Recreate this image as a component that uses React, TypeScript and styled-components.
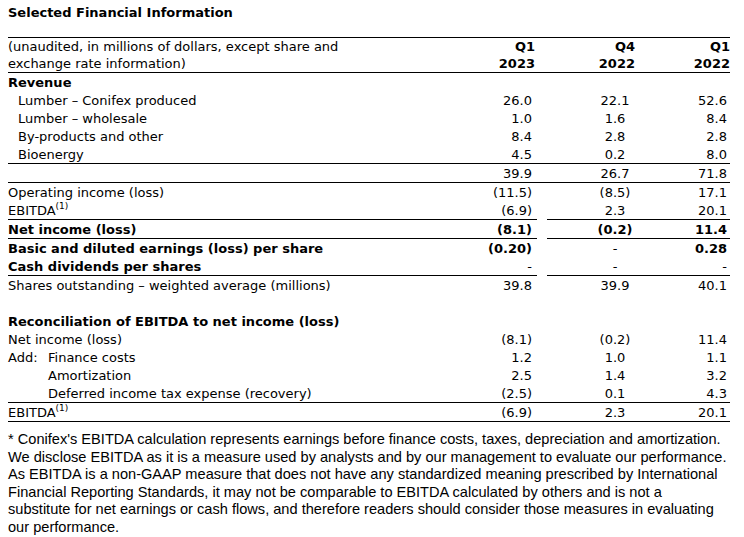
import styled, { createGlobalStyle, css } from 'styled-components';

const GlobalStyle = createGlobalStyle`
  html, body {
    margin: 0;
    padding: 0;
    background: #ffffff;
  }
  body {
    font-family: 'DejaVu Sans', Verdana, sans-serif;
    color: #000000;
  }
`;

const Page = styled.div`
  width: 744px;
  padding: 4px 8px 0 8px;
  box-sizing: border-box;
`;

const Title = styled.h2`
  margin: 0 0 16px 0;
  font-size: 13px;
  line-height: 17px;
  font-weight: bold;
`;

const Table = styled.div`
  width: 722px;
  display: flex;
  flex-direction: column;
  font-size: 13px;
`;

type Line = 'full' | 'split' | undefined;

const Row = styled.div`
  display: grid;
  grid-template-columns: 429px 100px 10px 90px 93px;
`;

const lineCss = (top: Line, bottom: Line, spacer: boolean) => css`
  border-top: ${top === 'full' || (top === 'split' && !spacer) ? '1px solid #000' : 'none'};
  border-bottom: ${bottom === 'full' || (bottom === 'split' && !spacer)
    ? '1px solid #000'
    : 'none'};
`;

const Cell = styled.div<{
  $top?: Line;
  $bottom?: Line;
  $spacer?: boolean;
  $align?: 'left' | 'right' | 'center';
  $bold?: boolean;
  $indent?: number;
  $pad?: number;
  $tall?: boolean;
}>`
  height: ${(p) => (p.$tall ? '34px' : '18px')};
  display: flex;
  flex-direction: column;
  justify-content: center;
  text-align: ${(p) => p.$align || 'left'};
  font-weight: ${(p) => (p.$bold ? 'bold' : 'normal')};
  padding-left: ${(p) => p.$indent || 0}px;
  padding-right: ${(p) => p.$pad || 0}px;
  line-height: 17px;
  white-space: nowrap;
  ${(p) => lineCss(p.$top, p.$bottom, !!p.$spacer)}
`;

const AddLabel = styled.span`
  display: inline-block;
  width: 40px;
`;

const Sup = styled.sup`
  font-size: 9px;
  line-height: 0;
  vertical-align: 6px;
`;

const Footnote = styled.div`
  margin-top: 9px;
  font-family: 'Liberation Sans', Arial, sans-serif;
  font-size: 14.6px;
  line-height: 17.5px;
  display: flex;
  flex-direction: column;
`;

const NoteLine = styled.span`
  white-space: nowrap;
`;

type Value = string | { v: string; bold?: boolean };

interface RowData {
  label?: React.ReactNode;
  bold?: boolean;
  indent?: number;
  values?: [Value, Value, Value];
  top?: Line;
  bottom?: Line;
}

const Ebitda = () => (
  <>
    EBITDA<Sup>(1)</Sup>
  </>
);

const rows: RowData[] = [
  { label: 'Revenue', bold: true },
  { label: 'Lumber – Conifex produced', indent: 10, values: ['26.0', '22.1', '52.6'] },
  { label: 'Lumber – wholesale', indent: 10, values: ['1.0', '1.6', '8.4'] },
  { label: 'By-products and other', indent: 10, values: ['8.4', '2.8', '2.8'] },
  { label: 'Bioenergy', indent: 10, values: ['4.5', '0.2', '8.0'], bottom: 'full' },
  { label: '', values: ['39.9', '26.7', '71.8'], bottom: 'full' },
  { label: 'Operating income (loss)', values: ['(11.5)', '(8.5)', '17.1'] },
  { label: <Ebitda />, values: ['(6.9)', '2.3', '20.1'], bottom: 'split' },
  {
    label: 'Net income (loss)',
    bold: true,
    values: [
      { v: '(8.1)', bold: true },
      { v: '(0.2)', bold: true },
      { v: '11.4', bold: true },
    ],
    bottom: 'split',
  },
  {
    label: 'Basic and diluted earnings (loss) per share',
    bold: true,
    values: [{ v: '(0.20)', bold: true }, '-', { v: '0.28', bold: true }],
  },
  { label: 'Cash dividends per shares', bold: true, values: ['-', '-', '-'], bottom: 'split' },
  {
    label: 'Shares outstanding – weighted average (millions)',
    values: ['39.8', '39.9', '40.1'],
  },
  { label: '' },
  { label: 'Reconciliation of EBITDA to net income (loss)', bold: true },
  { label: 'Net income (loss)', values: ['(8.1)', '(0.2)', '11.4'] },
  {
    label: (
      <span>
        <AddLabel>Add:</AddLabel>Finance costs
      </span>
    ),
    values: ['1.2', '1.0', '1.1'],
  },
  { label: 'Amortization', indent: 40, values: ['2.5', '1.4', '3.2'] },
  {
    label: 'Deferred income tax expense (recovery)',
    indent: 40,
    values: ['(2.5)', '0.1', '4.3'],
    bottom: 'full',
  },
  { label: <Ebitda />, values: ['(6.9)', '2.3', '20.1'], bottom: 'full' },
];

const read = (val?: Value) =>
  typeof val === 'string' ? { v: val, bold: false } : val || { v: '', bold: false };

const footnote = [
  "* Conifex's EBITDA calculation represents earnings before finance costs, taxes, depreciation and amortization.",
  'We disclose EBITDA as it is a measure used by analysts and by our management to evaluate our performance.',
  'As EBITDA is a non-GAAP measure that does not have any standardized meaning prescribed by International',
  'Financial Reporting Standards, it may not be comparable to EBITDA calculated by others and is not a',
  'substitute for net earnings or cash flows, and therefore readers should consider those measures in evaluating',
  'our performance.',
];

const headers = [
  ['Q1', '2023'],
  ['Q4', '2022'],
  ['Q1', '2022'],
];

export default function App() {
  return (
    <Page>
      <GlobalStyle />
      <Title>Selected Financial Information</Title>
      <Table>
        <Row>
          <Cell $tall $top='full' $bottom='full'>
            <span>(unaudited, in millions of dollars, except share and</span>
            <span>exchange rate information)</span>
          </Cell>
          <Cell $tall $top='full' $bottom='full' $align='right' $bold $pad={2}>
            <span>{headers[0][0]}</span>
            <span>{headers[0][1]}</span>
          </Cell>
          <Cell $tall $spacer $top='full' $bottom='full' />
          <Cell $tall $top='full' $bottom='full' $align='right' $bold $pad={2}>
            <span>{headers[1][0]}</span>
            <span>{headers[1][1]}</span>
          </Cell>
          <Cell $tall $top='full' $bottom='full' $align='right' $bold>
            <span>{headers[2][0]}</span>
            <span>{headers[2][1]}</span>
          </Cell>
        </Row>
        {rows.map((r, i) => {
          const [a, b, c] = (r.values || ['', '', '']).map(read);
          return (
            <Row key={i}>
              <Cell $top={r.top} $bottom={r.bottom} $bold={r.bold} $indent={r.indent}>
                <span>{r.label}</span>
              </Cell>
              <Cell $top={r.top} $bottom={r.bottom} $align='right' $pad={5} $bold={a.bold}>
                {a.v}
              </Cell>
              <Cell $top={r.top} $bottom={r.bottom} $spacer />
              <Cell $top={r.top} $bottom={r.bottom} $align='center' $indent={46} $bold={b.bold}>
                {b.v}
              </Cell>
              <Cell $top={r.top} $bottom={r.bottom} $align='right' $pad={3} $bold={c.bold}>
                {c.v}
              </Cell>
            </Row>
          );
        })}
      </Table>
      <Footnote>
        {footnote.map((l) => (
          <NoteLine key={l}>{l}</NoteLine>
        ))}
      </Footnote>
    </Page>
  );
}
